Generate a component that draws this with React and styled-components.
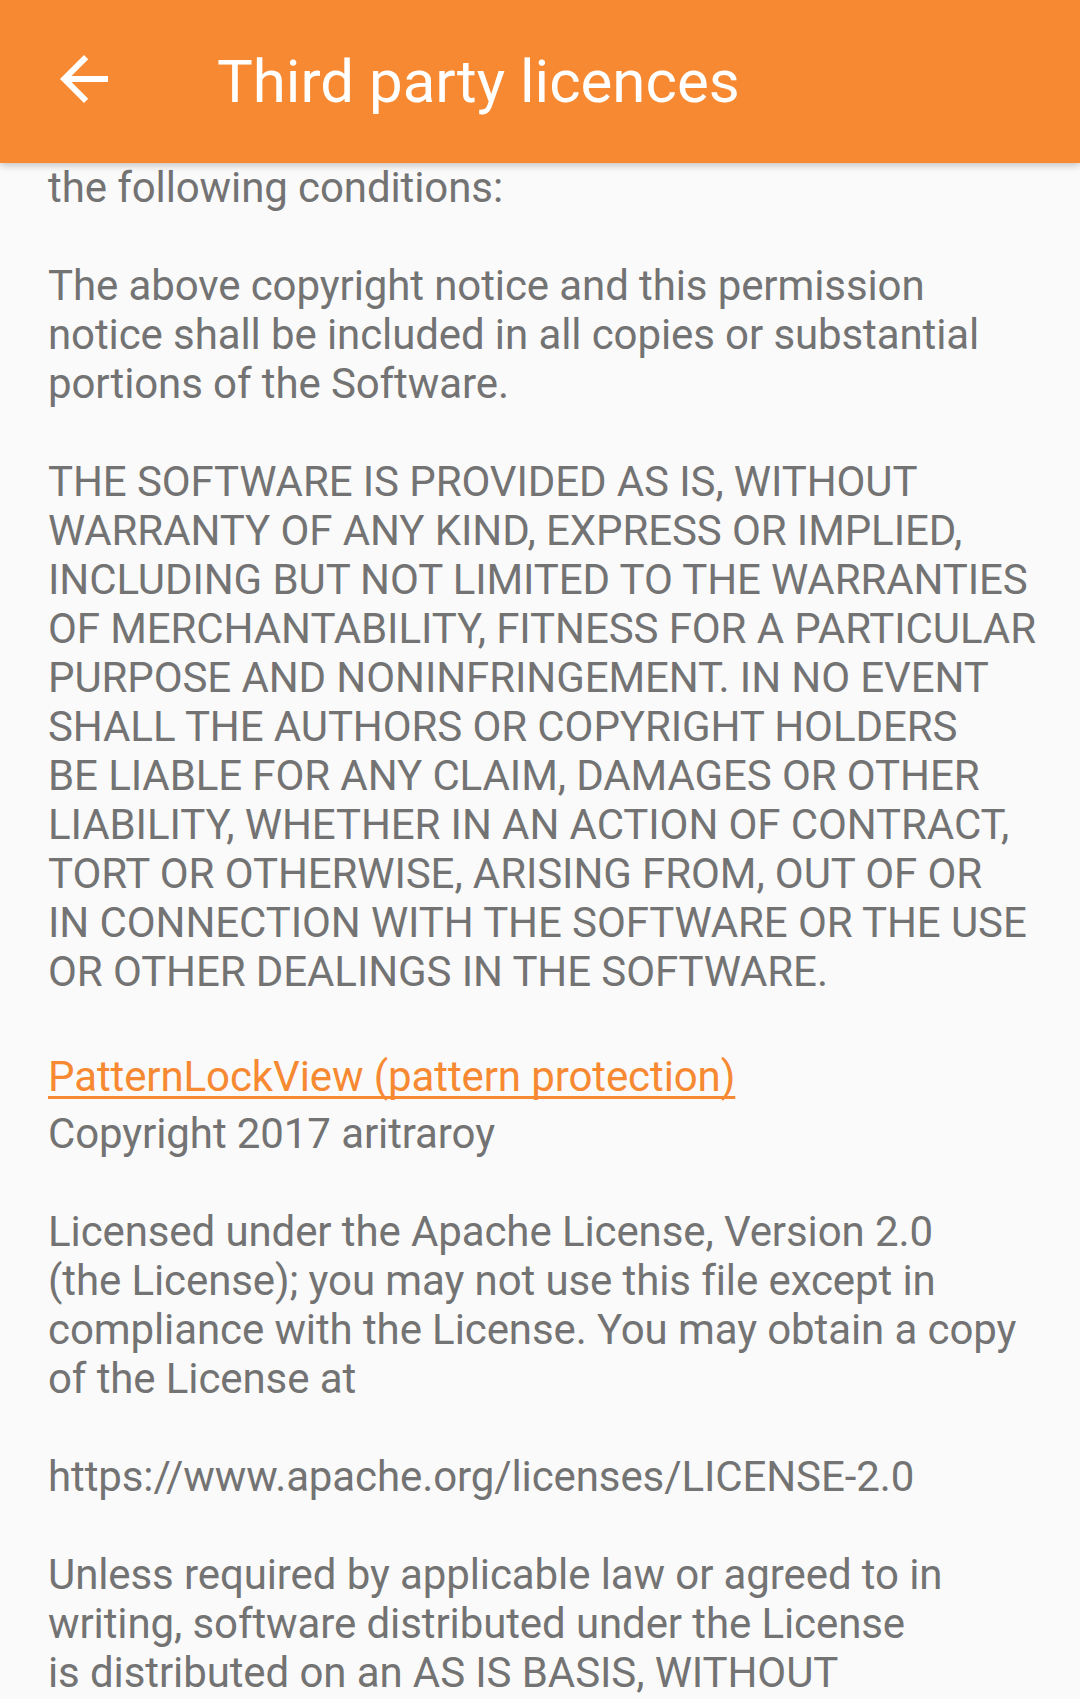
import React from 'react'
import styled, { createGlobalStyle } from 'styled-components'

const GlobalStyle = createGlobalStyle`
  html, body {
    margin: 0;
    padding: 0;
    background: #fafafa;
  }
  body {
    font-family: Roboto, "Noto Sans", sans-serif;
  }
`

const Screen = styled.div`
  display: flex;
  flex-direction: column;
  height: 1699px;
  overflow: hidden;
  background: #fafafa;
`

const AppBar = styled.header`
  position: relative;
  z-index: 2;
  flex: 0 0 163px;
  display: flex;
  align-items: center;
  background: #f68931;
  box-shadow: 0 3px 7px rgba(0, 0, 0, 0.2);
`

const BackButton = styled.button`
  flex: 0 0 217px;
  height: 100%;
  padding: 0 0 5px 48px;
  border: 0;
  background: transparent;
  display: flex;
  align-items: center;
  cursor: pointer;
`

const Title = styled.h1`
  margin: 0;
  font-family: Roboto, sans-serif;
  font-size: 60px;
  font-weight: 400;
  color: #ffffff;
`

const Content = styled.main`
  flex: 1;
  padding: 0 48px;
  color: #737373;
  font-size: 42px;
  line-height: 49px;
  letter-spacing: -0.1px;
`

const LicenseText = styled.p`
  margin: 0;
  white-space: pre;
`

const LicenseTitle = styled.a`
  display: block;
  width: max-content;
  margin: 56px 0 8px;
  color: #f68931;
  text-decoration: underline;
  text-decoration-thickness: 3px;
  text-underline-offset: 5px;
  text-decoration-skip-ink: none;
  white-space: pre;
`

const mitTail = `the following conditions:

The above copyright notice and this permission
notice shall be included in all copies or substantial
portions of the Software.

THE SOFTWARE IS PROVIDED AS IS, WITHOUT
WARRANTY OF ANY KIND, EXPRESS OR IMPLIED,
INCLUDING BUT NOT LIMITED TO THE WARRANTIES
OF MERCHANTABILITY, FITNESS FOR A PARTICULAR
PURPOSE AND NONINFRINGEMENT. IN NO EVENT
SHALL THE AUTHORS OR COPYRIGHT HOLDERS
BE LIABLE FOR ANY CLAIM, DAMAGES OR OTHER
LIABILITY, WHETHER IN AN ACTION OF CONTRACT,
TORT OR OTHERWISE, ARISING FROM, OUT OF OR
IN CONNECTION WITH THE SOFTWARE OR THE USE
OR OTHER DEALINGS IN THE SOFTWARE.`

const apache = `Copyright 2017 aritraroy

Licensed under the Apache License, Version 2.0
(the License); you may not use this file except in
compliance with the License. You may obtain a copy
of the License at

https://www.apache.org/licenses/LICENSE-2.0

Unless required by applicable law or agreed to in
writing, software distributed under the License
is distributed on an AS IS BASIS, WITHOUT`

const BackArrow = () => (
  <svg width="72" height="72" viewBox="0 0 24 24" fill="#ffffff">
    <path d="M20 11H7.83l5.59-5.59L12 4l-8 8 8 8 1.41-1.41L7.83 13H20v-2z" />
  </svg>
)

const App = () => (
  <Screen>
    <GlobalStyle />
    <AppBar>
      <BackButton aria-label="Back">
        <BackArrow />
      </BackButton>
      <Title>Third party licences</Title>
    </AppBar>
    <Content>
      <LicenseText>{mitTail}</LicenseText>
      <LicenseTitle href="#">PatternLockView (pattern protection)</LicenseTitle>
      <LicenseText>{apache}</LicenseText>
    </Content>
  </Screen>
)

export default App
